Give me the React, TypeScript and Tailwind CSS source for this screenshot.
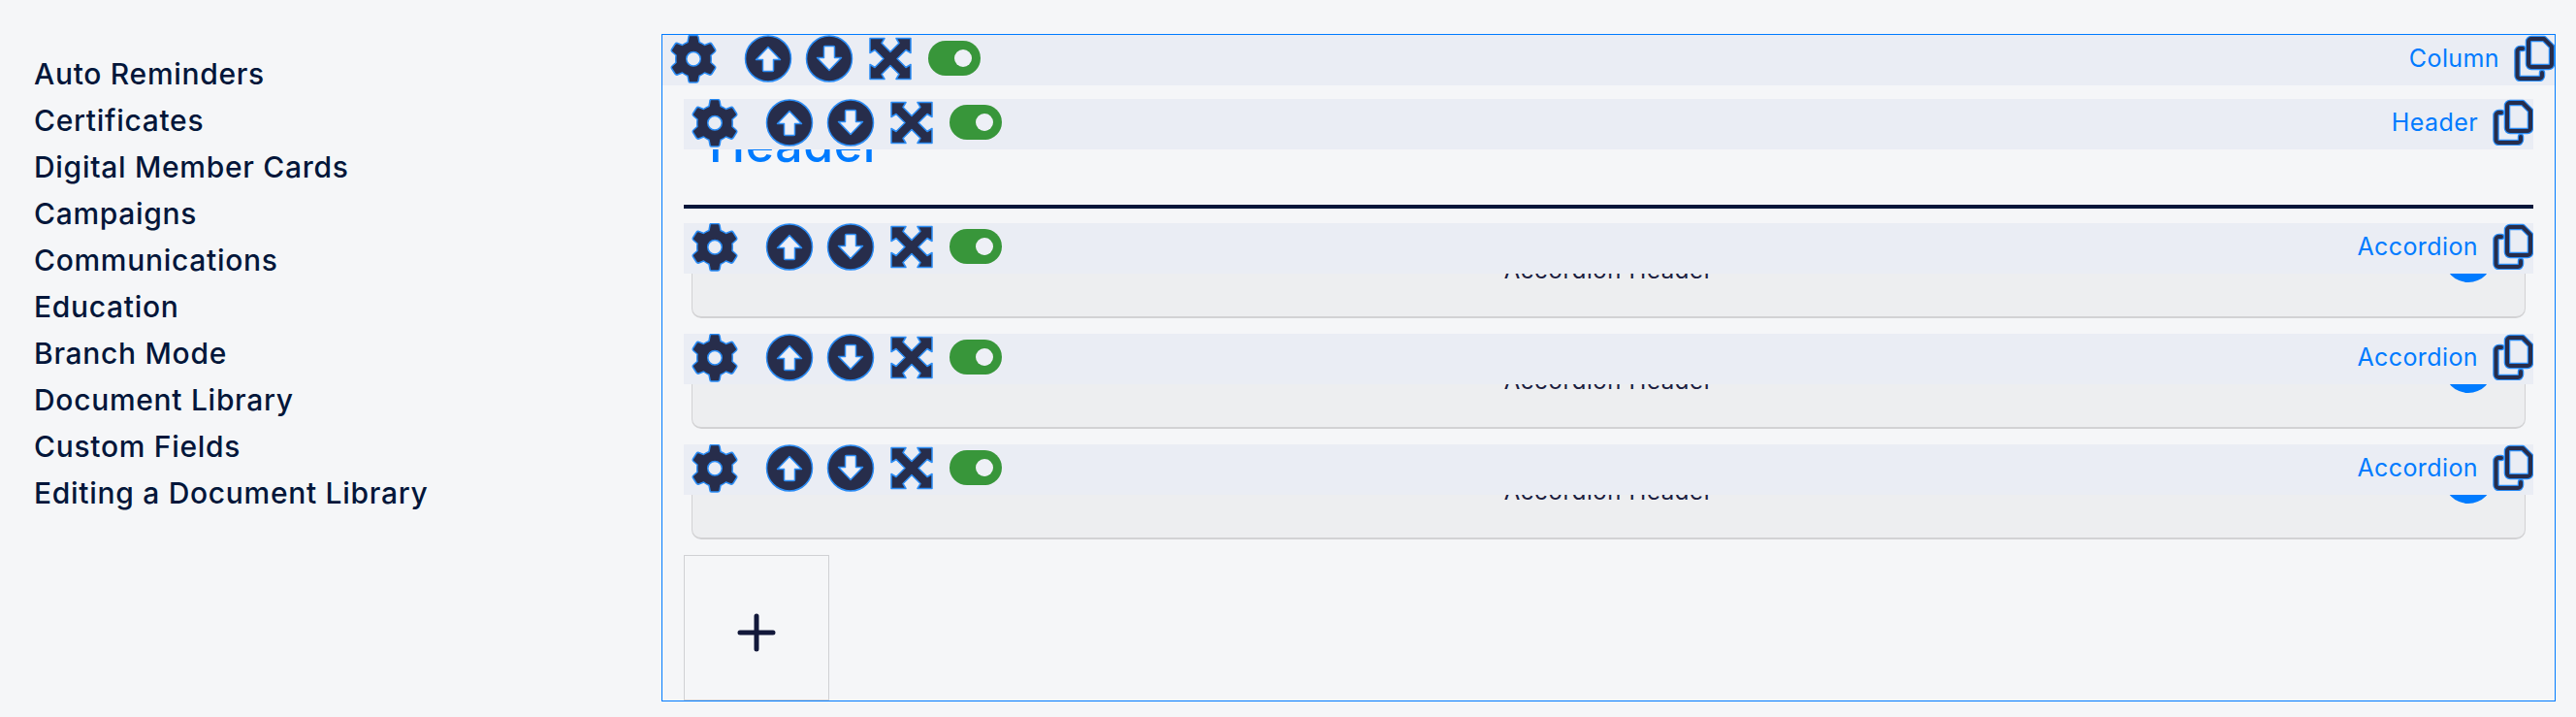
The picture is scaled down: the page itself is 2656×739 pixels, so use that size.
import React from "react";

const NAV = ["Auto Reminders","Certificates","Digital Member Cards","Campaigns","Communications","Education","Branch Mode","Document Library","Custom Fields","Editing a Document Library"];
const DARK = "#272d4b";
const BLUE = "#2a8cf5";
const LIGHT = "#eef0f7";

function Gear() {
  return (
    <svg width="50" height="50" viewBox="0 0 50 50" className="block shrink-0">
      <path fillRule="evenodd" fill={DARK} stroke={BLUE} strokeWidth="1.5" strokeLinejoin="round"
        d="M20 2 Q20 0.5 21.5 0.5 H28 Q29.5 0.5 30 2 L31 7.5 Q34 8.7 36.5 10.5 L41.5 8.5 Q43 8 44 9.5 L47.5 15 Q48.2 16.5 47 17.5 L43 21 Q43.4 25 43 28.5 L47 32 Q48.2 33 47.5 34.5 L44 40 Q43 41.5 41.5 41 L36.5 39 Q34 41 31 42.2 L30 47.5 Q29.5 49 28 49 H21.5 Q20 49 20 47.5 L19 42.2 Q16 41 13.5 39 L8.5 41 Q7 41.5 6 40 L2.5 34.5 Q1.8 33 3 32 L7 28.5 Q6.6 25 7 21 L3 17.5 Q1.8 16.5 2.5 15 L6 9.5 Q7 8 8.5 8.5 L13.5 10.5 Q16 8.7 19 7.5 Z M25 17.5 A7.2 7.2 0 1 0 25 32 A7.2 7.2 0 1 0 25 17.5 Z" />
    </svg>
  );
}

function ArrowCircle({ down }: { down?: boolean }) {
  return (
    <svg width="50" height="50" viewBox="0 0 50 50" className="block shrink-0">
      <circle cx="25" cy="24.5" r="23.5" fill={DARK} stroke={BLUE} strokeWidth="1.5" />
      <path transform={down ? "rotate(180 25 24.5)" : undefined} fill={LIGHT} stroke={BLUE} strokeWidth="1.5" strokeLinejoin="round"
        d="M25 12.5 L37.5 25.5 L30.5 25.5 L30.5 36.5 Q30.5 37.5 29.5 37.5 L20.5 37.5 Q19.5 37.5 19.5 36.5 L19.5 25.5 L12.5 25.5 Z" />
    </svg>
  );
}

function Move() {
  return (
    <svg width="50" height="50" viewBox="-25 -24.5 50 50" className="block shrink-0">
      <path fill={DARK} stroke={BLUE} strokeWidth="1.5" strokeLinejoin="round"
        d="M-21 -21 H-6 L-9 -16 L0 -7 L9 -16 L6 -21 H21 V-6 L16 -9 L7 0 L16 9 L21 6 V21 H6 L9 16 L0 7 L-9 16 L-6 21 H-21 V6 L-16 9 L-7 0 L-16 -9 L-21 -6 Z" />
    </svg>
  );
}

function Toggle() {
  return (
    <div className="flex h-[36px] w-[54px] shrink-0 items-center justify-end rounded-full bg-[#38963a] pr-[9px]">
      <div className="h-[18px] w-[18px] rounded-full bg-[#eef0f6]" />
    </div>
  );
}

function Copy() {
  const back = "M9 14 H6.5 a3 3 0 0 0 -3 3 V42 a3 3 0 0 0 3 3 H26 a3 3 0 0 0 3 -3 V39";
  const front = "M18 4 H31 L39 12 V30 a3 3 0 0 1 -3 3 H18 a3 3 0 0 1 -3 -3 V7 a3 3 0 0 1 3 -3 Z";
  return (
    <svg width="42" height="48" viewBox="0 0 42 48" fill="none" strokeLinejoin="round" strokeLinecap="round" className="block shrink-0">
      <path d={back} stroke={BLUE} strokeWidth="6.5" />
      <path d={front} stroke={BLUE} strokeWidth="6.5" />
      <path d={back} stroke={DARK} strokeWidth="4" />
      <path d={front} stroke={DARK} strokeWidth="4" />
    </svg>
  );
}

function Toolbar({ label, overlay }: { label: string; overlay?: boolean }) {
  return (
    <div className={overlay
      ? "absolute inset-x-0 top-0 z-10 flex h-[52px] items-start bg-[#eaedf4] pl-[7px]"
      : "flex h-[52px] items-start bg-[#eaedf4] pl-[7px]"}>
      <Gear />
      <div className="ml-[27px]"><ArrowCircle /></div>
      <div className="ml-[13px]"><ArrowCircle down /></div>
      <div className="ml-[13px]"><Move /></div>
      <div className="ml-[14px] mt-[6px]"><Toggle /></div>
      <div className="ml-auto flex h-[48px] items-center gap-[15px]">
        <span className="text-[25px] leading-[50px] tracking-[0.4px] text-[#007bff]">{label}</span>
        <Copy />
      </div>
    </div>
  );
}

function Accordion() {
  return (
    <div className="relative mb-[16px] h-[98px]">
      <Toolbar label="Accordion" overlay />
      <div className="relative mx-[8px] flex h-[98px] justify-center rounded-[10px] border border-b-2 border-[#d2d2d4] bg-[#edeef0] pt-[30px]">
        <span className="text-[24px] leading-[36px] tracking-[0.6px] text-[#1b2040]">Accordion Header</span>
        <div className="absolute right-[33px] top-[10px] h-[50px] w-[50px] rounded-full bg-[#007bff]" />
      </div>
    </div>
  );
}

export default function App() {
  return (
    <div className="flex h-[739px] overflow-hidden bg-[#f5f6f8] font-['Inter','Liberation_Sans',sans-serif]">
      <nav className="w-[682px] shrink-0 pl-[35px] pt-[52px]">
        {NAV.map((n) => (
          <div key={n} className="h-[48px] text-[30px] font-medium leading-[48px] tracking-[0.7px] text-[#03163a]">{n}</div>
        ))}
      </nav>
      <div className="mt-[35px] h-[688px] w-[1953px] shrink-0 border border-[#007bff]">
        <Toolbar label="Column" />
        <div className="mx-[22px] mt-[14px]">
          <div className="relative h-[113px] border-b-4 border-[#03163a]">
            <Toolbar label="Header" overlay />
            <div className="pl-[26px] pt-[18px] text-[50px] font-medium leading-[58px] tracking-[0.6px] text-[#007bff]">Header</div>
          </div>
          <div className="mt-[15px]">
            <Accordion />
            <Accordion />
            <Accordion />
          </div>
          <div className="flex h-[150px] w-[150px] items-center justify-center border border-[#d0d1d4] pt-[10px]">
            <svg width="40" height="40" viewBox="0 0 40 40" fill="none" stroke="#12183a" strokeWidth="5" strokeLinecap="round">
              <path d="M20 3 V37 M3 20 H37" />
            </svg>
          </div>
        </div>
      </div>
    </div>
  );
}
